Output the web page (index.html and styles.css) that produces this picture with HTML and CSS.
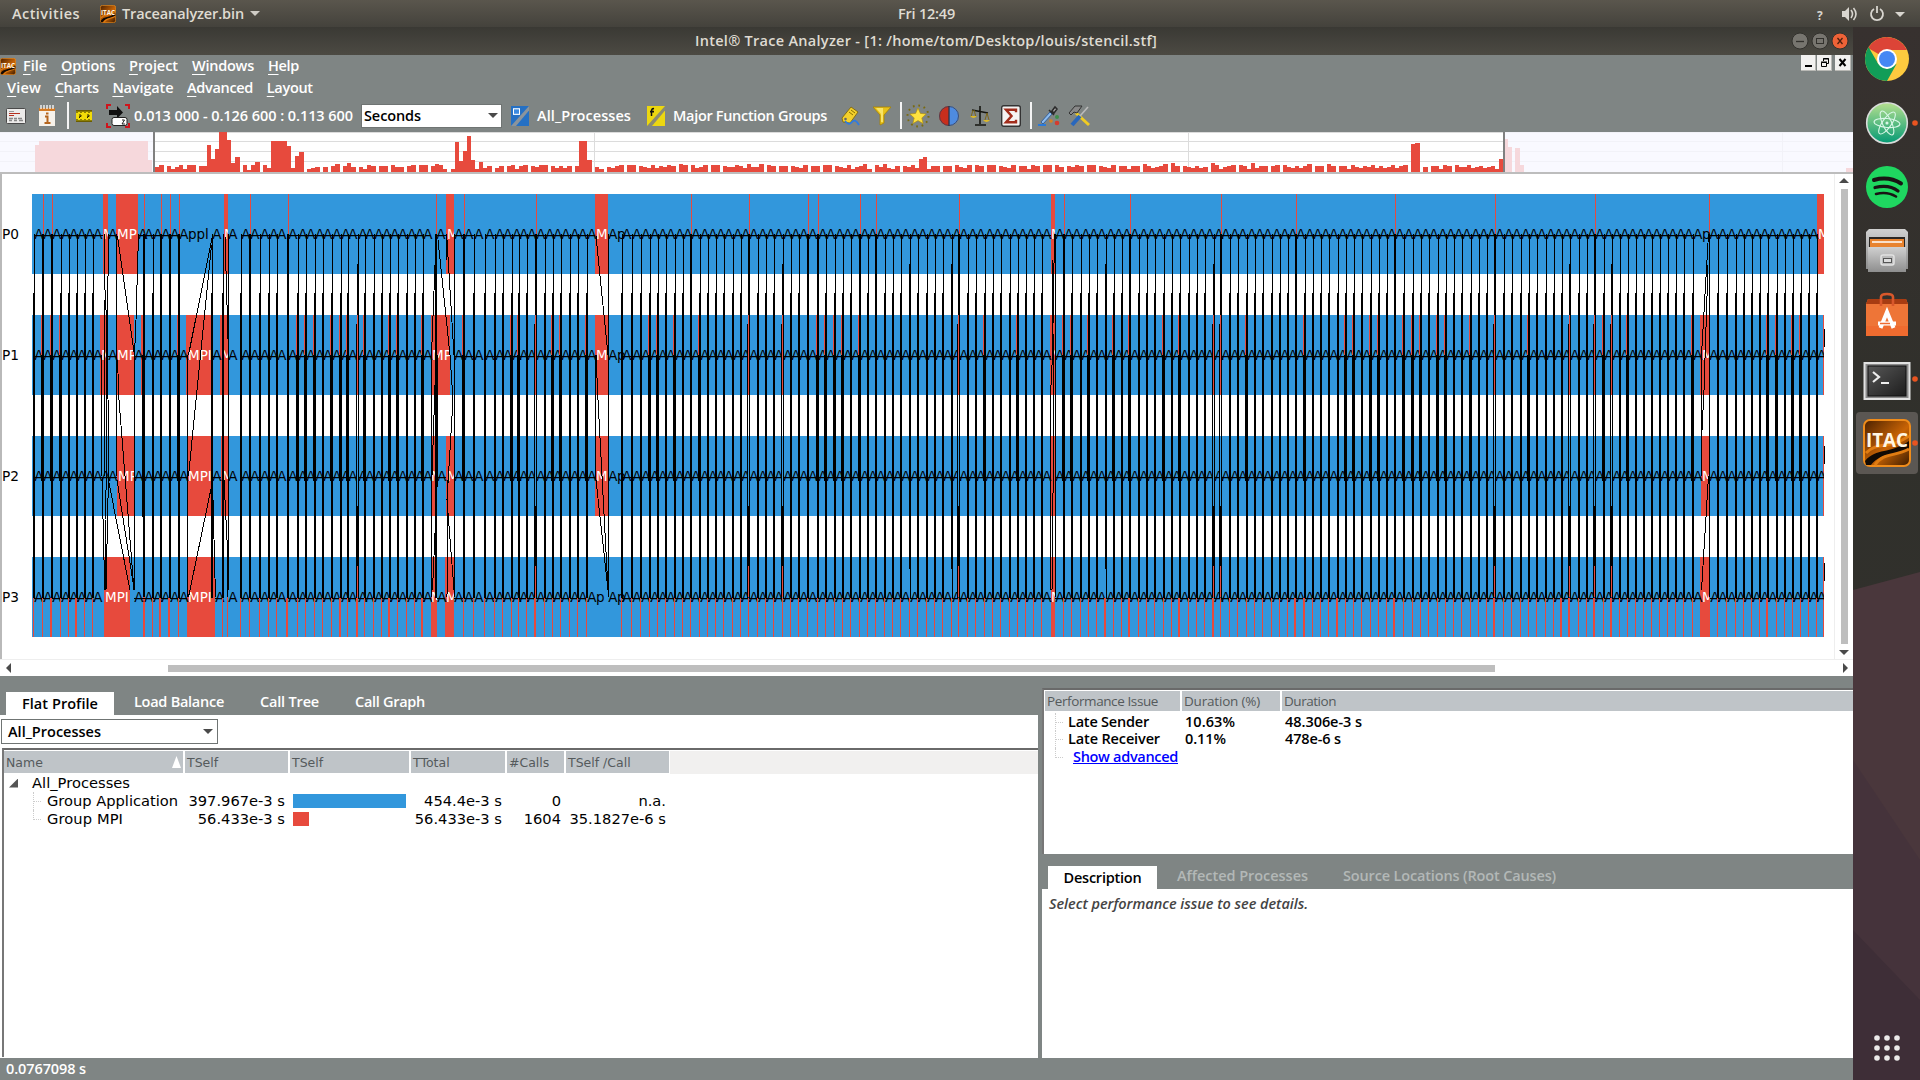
FILE: index.html
```html
<!DOCTYPE html>
<html lang="en">
<head>
<meta charset="utf-8">
<title>Intel Trace Analyzer</title>
<link rel="stylesheet" href="styles.css">
</head>
<body>
<svg class="defs" width="0" height="0">
  <defs>
    <linearGradient id="org" x1="0" y1="0" x2="1" y2="1"><stop offset="0" stop-color="#4a2000"/><stop offset=".55" stop-color="#c96405"/><stop offset="1" stop-color="#3a1a00"/></linearGradient>
    <linearGradient id="atomg" x1="0" y1="0" x2="0" y2="1"><stop offset="0" stop-color="#b6e08f"/><stop offset="1" stop-color="#049a74"/></linearGradient>
    <linearGradient id="steel" x1="0" y1="0" x2="0" y2="1"><stop offset="0" stop-color="#d0d0d0"/><stop offset="1" stop-color="#8e8e8e"/></linearGradient>
    <linearGradient id="screen" x1="0" y1="0" x2="1" y2="1"><stop offset="0" stop-color="#575757"/><stop offset="1" stop-color="#1d1d1d"/></linearGradient>
    <symbol id="itac" viewBox="0 0 48 48">
      <rect x="1" y="1" width="46" height="46" rx="6" fill="url(#org)" stroke="#f08c1a" stroke-width="2"/>
      <path d="M2 42C14 28 26 36 46 22V30C30 38 20 32 8 46H3z" fill="#120a04"/>
      <path d="M3 34C14 22 26 31 46 17M12 46C20 33 32 38 46 30" fill="none" stroke="#e07c12" stroke-width="3"/>
      <text x="3" y="28" textLength="42" lengthAdjust="spacingAndGlyphs" class="itac-text">ITAC</text>
    </symbol>
  </defs>
</svg>

<header class="topbar">
  <span class="t" data-w="68">Activities</span>
  <svg width="16" height="18" viewBox="0 0 48 48" preserveAspectRatio="none"><use href="#itac"/></svg>
  <span class="t" data-w="122">Traceanalyzer.bin</span>
  <i class="tri-down light"></i>
  <span class="t clock" data-w="57">Fri 12:49</span>
  <svg class="tray" width="90" height="20" viewBox="0 0 90 20">
    <text x="2" y="16" class="tray-q">?</text>
    <path d="M27 7h3l4-4v14l-4-4h-3z" fill="#d8d5cf"/>
    <path d="M36 6q3 4 0 8M38.500 4q5 6 0 12" fill="none" stroke="#d8d5cf" stroke-width="1.600"/>
    <path d="M59 5a6 6 0 1 0 6 0M62 2v7" fill="none" stroke="#d8d5cf" stroke-width="1.800"/>
    <path d="M80 8h10l-5 5z" fill="#d8d5cf"/>
  </svg>
</header>

<div class="desk">
<main class="window">
  <div class="titlebar">
    <span class="t" data-w="462">Intel® Trace Analyzer - [1: /home/tom/Desktop/louis/stencil.stf]</span>
    <svg class="winbtns" width="58" height="18" viewBox="0 0 58 18">
      <circle cx="9" cy="9" r="8" fill="#77756f" stroke="#32312d"/><path d="M5 9.500h8" stroke="#32312d" stroke-width="1.300"/>
      <circle cx="29" cy="9" r="8" fill="#77756f" stroke="#32312d"/><rect x="25.500" y="6.500" width="7" height="5" fill="none" stroke="#32312d"/>
      <circle cx="49" cy="9" r="8" fill="#ee6237" stroke="#32312d"/><path d="M46.500 6l5 6M51.500 6l-5 6" stroke="#4b200f" stroke-width="1.300"/>
    </svg>
  </div>

  <div class="menus">
    <nav class="menu first">
      <svg width="16" height="17" viewBox="0 0 48 48" preserveAspectRatio="none"><use href="#itac"/></svg>
      <span class="t" data-w="24"><u>F</u>ile</span><span class="t" data-w="54"><u>O</u>ptions</span><span class="t" data-w="49"><u>P</u>roject</span><span class="t" data-w="62"><u>W</u>indows</span><span class="t" data-w="31"><u>H</u>elp</span>
      <svg class="mdi" width="50" height="16" viewBox="0 0 50 16">
        <path d="M0 0h15v16H0zM16 0h15v16H16zM34 0h16v16H34z" fill="#b9b9b5"/><path d="M0 0h14v15H0zM16 0h14v15H16zM34 0h15v15H34z" fill="#f2f1f0"/>
        <path d="M4 11h7M38.500 4l6 7M44.500 4l-6 7" stroke="#000" stroke-width="2"/>
        <path d="M20.500 7.500h5v4h-5zM20 7h6M22.500 6V3.500h5v5H26M22 4h6" fill="none" stroke="#000"/>
      </svg>
    </nav>
    <nav class="menu second">
      <span class="t" data-w="34"><u>V</u>iew</span><span class="t" data-w="44"><u>C</u>harts</span><span class="t" data-w="61"><u>N</u>avigate</span><span class="t" data-w="66"><u>A</u>dvanced</span><span class="t" data-w="46"><u>L</u>ayout</span>
    </nav>
    <div class="toolbar">
      <svg style="grid-column:2" width="20" height="16" viewBox="0 0 20 16"><rect x=".5" y=".5" width="19" height="15" rx="1" fill="#ecebea" stroke="#4a4a4a"/><path d="M3 3.500h5" stroke="#999"/><path d="M3 5.500h11M3 7.500h5" stroke="#b5301f"/><path d="M3 10.500h4m1 0h3m1 0h4M3 12.500h3m2 0h3m2 0h4" stroke="#888" stroke-width="1.300"/></svg>
      <svg style="grid-column:4" width="16" height="21" viewBox="0 0 16 21"><path d="M0 3h16v18H0z" fill="#f7f2ea"/><path d="M0 3h16v3H0z" fill="#d27b26"/><path d="M2 0v4M5 0v4M8 0v4M11 0v4M14 0v4" stroke="#eee" stroke-width="1.500"/><path d="M6 11.500h2.500v6M5.500 18h6" fill="none" stroke="#b5651d" stroke-width="2"/><path d="M7 7.500h2.500v2H7z" fill="#b5651d"/></svg>
      <i class="sep" style="grid-column:6"></i>
      <svg style="grid-column:8" width="16" height="12" viewBox="0 0 16 12"><path d="M0 0h16v12H0z" fill="#f2dc08"/><path d="M1 0v3M3 0v2M5 0v3M7 0v2M9 0v3M11 0v2M13 0v3M15 0v2M1 12V9M3 12v-2M5 12V9M7 12v-2M9 12V9M11 12v-2M13 12V9M15 12v-2M3 5h2v1.500H3.500V8M11 5h2v1.500h-1.500V8" fill="none" stroke="#2a2600"/><path d="M0 .5h16M0 11.500h16" stroke="#6b5d00"/></svg>
      <svg style="grid-column:10" width="24" height="24" viewBox="0 0 24 24"><path d="M1 5V1h4M19 1h4v4M1 19v4h4M23 19v4h-4" fill="none" stroke="#d0141c" stroke-width="2"/><path d="M3 6h8V2l6 6.500-6 6V11H3z" fill="#111"/><rect x="6" y="13.500" width="15" height="8" rx="2" fill="#fff" stroke="#222"/><path d="M16 16h2.500l-2.500 4h3" stroke="#222" fill="none"/></svg>
      <span class="t" style="grid-column:12" data-w="219">0.013 000 - 0.126 600 : 0.113 600</span>
      <div class="combo" style="grid-column:14"><span class="t" data-w="57">Seconds</span><i class="tri-down"></i></div>
      <svg style="grid-column:16" width="18" height="20" viewBox="0 0 18 18" preserveAspectRatio="none"><path d="M0 0h18v18H0z" fill="#2570c4"/><path d="M0 18L18 0v4L5 18z" fill="#8b949c"/><rect x="2.500" y="2.500" width="6" height="5" fill="#3c8ae0" stroke="#fff"/></svg>
      <span class="t" style="grid-column:18" data-w="94">All_Processes</span>
      <svg style="grid-column:20" width="18" height="20" viewBox="0 0 18 18" preserveAspectRatio="none"><path d="M0 0h18v18H0z" fill="#ecd710"/><path d="M0 18L18 0v4L5 18z" fill="#8b8b70"/><path d="M7 2.500Q4.500 2 4.500 5v4M3 5h4" fill="none" stroke="#111" stroke-width="1.500"/></svg>
      <span class="t" style="grid-column:22" data-w="154">Major Function Groups</span>
      <svg style="grid-column:24" width="20" height="20" viewBox="0 0 20 20"><path d="M1 12L10 1l7 5-8 11-7-1z" fill="#f4d02c" stroke="#7c6200" stroke-width=".8"/><path d="M8 6l4 3M10 4l4 3" stroke="#8b7000"/><circle cx="4.500" cy="13" r="1.300" fill="#666"/><path d="M4 15q4 5 7 1t7 3" fill="none" stroke="#2f7be0" stroke-width="1.800"/></svg>
      <svg style="grid-column:26" width="18" height="20" viewBox="0 0 18 20"><path d="M0 1h18l-7 8v8l-4 2V9z" fill="#e8c21b" stroke="#a98400" stroke-width=".8"/><path d="M3 2h7v14H8V8z" fill="#f8e468"/></svg>
      <i class="sep" style="grid-column:28"></i>
      <svg style="grid-column:30" width="24" height="24" viewBox="0 0 24 24"><circle cx="12" cy="12" r="10.500" fill="none" stroke="#7a6a10" stroke-width="2" stroke-dasharray="1.700 3.800"/><path d="M12 4l2.400 5.400 5.800.6-4.400 3.900 1.300 5.700-5.100-3-5.100 3 1.300-5.700L3.800 10l5.800-.6z" fill="#ffe240" stroke="#b38f00" stroke-width=".6"/></svg>
      <svg style="grid-column:32" width="20" height="20" viewBox="0 0 20 20"><path d="M10 0a10 10 0 0 0 0 20z" fill="#c92e1c"/><path d="M10 0a10 10 0 0 1 0 20z" fill="#4e8be0"/><circle cx="10" cy="10" r="9.500" fill="none" stroke="#3a3f55" stroke-width=".8"/><path d="M10 0v20" stroke="#2d3548" stroke-width="1.300"/></svg>
      <svg style="grid-column:34" width="20" height="20" viewBox="0 0 20 20"><path d="M10 0v18M2 4l16 3M5 19h11" stroke="#15150f" stroke-width="1.600"/><path d="M3 4L1 11M4 4l2 7M17 7l-2 7M17 7l2 7" stroke="#7c661a"/><path d="M0 10h7q-3.500 4-7 0zM13 14h7q-3.500 4-7 0z" fill="#dcb92a"/></svg>
      <svg style="grid-column:36" width="20" height="22" viewBox="0 0 20 21" preserveAspectRatio="none"><rect x=".7" y=".7" width="18.600" height="19.600" rx="2" fill="#f5f3f2" stroke="#333" stroke-width="1.400"/><path d="M15 7V4.500H5L10.500 10.500 5 16.500h10V14" fill="none" stroke="#a22d1c" stroke-width="2.400"/></svg>
      <i class="sep" style="grid-column:38"></i>
      <svg style="grid-column:40" width="22" height="22" viewBox="0 0 22 22"><path d="M3 17L12 7l2 2L5 19z" fill="#8dbbee" stroke="#245394" stroke-width=".8"/><path d="M11 5l5 5M14 6l3-4 2 2-3 4z" stroke="#2b2b2b" fill="#aaa" stroke-width="1.500"/><path d="M0 19h8v2H0z" fill="#2b79d8"/><circle cx="13" cy="16" r="1.800" fill="#d88122"/><circle cx="19" cy="12" r="2" fill="#3e8f4a"/><circle cx="19" cy="18" r="2.300" fill="#d53c2f"/></svg>
      <svg style="grid-column:42" width="22" height="22" viewBox="0 0 22 22"><path d="M21 20L8 8" stroke="#f0cc22" stroke-width="3"/><path d="M4 20L12 11" stroke="#2867bc" stroke-width="4"/><path d="M12 11l8-9" stroke="#bbb" stroke-width="1.600"/><path d="M1 8L7 1h7L9 8l-3-1-3 3z" fill="#888" stroke="#333"/></svg>
    </div>
  </div>

  <svg class="overview" id="overview" width="1853" height="42" viewBox="0 132 1853 42" shape-rendering="crispEdges"></svg>

  <section class="timeline">
    <svg id="chart" width="1835" height="485" viewBox="0 174 1835 485" shape-rendering="crispEdges"></svg>
    <div class="vscroll"><i class="tri-up"></i><b></b><i class="tri-down"></i></div>
    <div class="hscroll"><i class="tri-left"></i><b></b><i class="tri-right"></i></div>
  </section>

  <section class="panels">
    <div class="left">
      <div class="tabs">
        <span class="tab on"><span class="t" data-w="76">Flat Profile</span></span>
        <span class="t" data-w="90">Load Balance</span><span class="t" data-w="59">Call Tree</span><span class="t" data-w="70">Call Graph</span>
      </div>
      <div class="body">
        <div class="combo wide"><span class="t" data-w="93">All_Processes</span><i class="tri-down"></i></div>
        <div class="profile">
          <div class="head">
            <span>Name<i class="sort"></i></span><span>TSelf</span><span>TSelf</span><span>TTotal</span><span>#Calls</span><span>TSelf /Call</span>
          </div>
          <div class="row root"><i class="expander"></i><span class="t" data-w="98">All_Processes</span></div>
          <div class="row"><i class="branch"></i><span class="name t" data-w="131">Group Application</span><span class="num">397.967e-3 s</span><i class="bar"></i><span class="num">454.4e-3 s</span><span class="num">0</span><span class="num">n.a.</span></div>
          <div class="row"><i class="branch last"></i><span class="name t" data-w="76">Group MPI</span><span class="num">56.433e-3 s</span><i class="bar mpi"></i><span class="num">56.433e-3 s</span><span class="num">1604</span><span class="num">35.1827e-6 s</span></div>
        </div>
      </div>
    </div>

    <div class="right">
      <div class="issues">
        <div class="head"><span><span class="t" data-w="111">Performance Issue</span></span><span><span class="t" data-w="76">Duration (%)</span></span><span><span class="t" data-w="52">Duration</span></span></div>
        <div class="row"><i class="branch"></i><span class="t" data-w="81">Late Sender</span><span class="t" data-w="50">10.63%</span><span class="t" data-w="77">48.306e-3 s</span></div>
        <div class="row"><i class="branch"></i><span class="t" data-w="92">Late Receiver</span><span class="t" data-w="41">0.11%</span><span class="t" data-w="56">478e-6 s</span></div>
        <div class="row"><i class="branch last"></i><a class="t" data-w="105">Show advanced</a></div>
      </div>
      <div class="tabs off">
        <span class="tab on"><span class="t" data-w="78">Description</span></span>
        <span class="t" data-w="131">Affected Processes</span><span class="t" data-w="213">Source Locations (Root Causes)</span>
      </div>
      <div class="desc"><em class="t" data-w="259">Select performance issue to see details.</em></div>
    </div>
  </section>

  <footer><span class="t" data-w="80">0.0767098 s</span></footer>
</main>

<aside class="dock">
  <svg width="67" height="1053" viewBox="1853 27 67 1053">
    <path d="M1853 590L1920 572V1080H1853z" fill="#4a373c"/>
    <path d="M1853 760L1920 860V1080H1853z" fill="#45333b"/>
    <path d="M1853 930L1920 1000V1080H1853z" fill="#3e2e37"/>
    <g transform="translate(1887 59)">
      <circle r="22" fill="#fdca3f"/>
      <path d="M0 0L-19 -11A22 22 0 0 1 20 -9H0z" fill="#dc4437"/>
      <path d="M-18.500 -12A22 22 0 0 0 0 22L9.500 5 0 10-8.700 5z" fill="#119d58"/>
      <circle r="10" fill="#fff"/><circle r="8" fill="#4587f4"/>
    </g>
    <g transform="translate(1887 123)" fill="none" stroke="#d9f7e8" stroke-width="1.100">
      <circle r="20.300" fill="url(#atomg)" stroke="#d9dcdb" stroke-width="1.600"/>
      <ellipse rx="13" ry="4.500" transform="rotate(5)"/><ellipse rx="13" ry="4.500" transform="rotate(65)"/><ellipse rx="13" ry="4.500" transform="rotate(125)"/><circle r="1" fill="#fff"/>
    </g>
    <g transform="translate(1887 187)" fill="none" stroke="#191414" stroke-linecap="round">
      <circle r="21" fill="#1fd760" stroke="none"/><path d="M-13 -7Q2 -11 14 -3.500" stroke-width="4"/><path d="M-12 .5Q2 -3 11 4" stroke-width="3.200"/><path d="M-11 7Q0 4 9 9.500" stroke-width="2.600"/>
    </g>
    <path d="M1869 229h36l3 3v37h-42v-37z" fill="url(#steel)"/><path d="M1869 237h36v12h-36z" fill="#2b2724"/><path d="M1870 239h34v9h-34z" fill="#e8832f"/><path d="M1872 242h30" stroke="#fff" stroke-width="1.500"/><path d="M1868 247h38v25h-38z" fill="url(#steel)"/><rect x="1881" y="255" width="13" height="10" rx="2" fill="#bbb" stroke="#e2e2e2" stroke-width="1.500"/><rect x="1883.500" y="258.500" width="8" height="4" fill="#ddd" stroke="#555"/>
    <path d="M1868 299h38l2 5v32h-42v-32z" fill="#ee7537"/><path d="M1868 299h38l2 5h-42z" fill="#a83c12"/><path d="M1866 326h42v10h-42z" fill="#f0642a" opacity=".6"/><path d="M1881 306v-9q0-3 6-3t6 3v9" fill="none" stroke="#d9582b" stroke-width="2.600"/>
    <path d="M1880.500 328L1887 312l6.500 16M1878 323.500h18" fill="none" stroke="#fff" stroke-width="4"/><path d="M1880 323.500h10" stroke="#ee6a30" stroke-width="1.500"/>
    <rect x="1864.500" y="363" width="45" height="36" fill="#8a8a8a" stroke="#e2e2e2" stroke-width="2"/><rect x="1868" y="366" width="38" height="30" fill="url(#screen)" stroke="#111"/>
    <path d="M1873 372l6 5-6 5M1881 383h8" fill="none" stroke="#eee" stroke-width="2.200"/>
    <rect x="1856" y="412" width="62" height="62" rx="4" fill="#5b5753"/>
    <svg x="1863" y="419" width="48" height="48" viewBox="0 0 48 48"><use href="#itac"/></svg>
    <g fill="#e95420"><circle cx="1915" cy="123" r="2.800"/><circle cx="1915" cy="379" r="2.800"/><circle cx="1915" cy="443" r="2.800"/></g>
    <g fill="#eceaea" id="grid"></g>
  </svg>
</aside>
</div>
<script src="app.js"></script>
</body>
</html>
```
FILE: styles.css
```css
* { box-sizing: border-box; }
body { margin: 0; width: 1920px; height: 1080px; overflow: hidden; background: #35312e; font: 500 15px/18px "Open Sans", "Noto Sans", sans-serif; color: #fff; }
.defs { position: absolute; }
svg { display: block; flex: none; }
.t { display: inline-block; white-space: nowrap; font-size: 14.5px; font-weight: 600; flex: none; justify-self: start; }
.itac-text { font: 700 20px "Open Sans", sans-serif; fill: #fff6e4; }
u { text-underline-offset: 3px; text-decoration-thickness: 1px; }

.topbar { height: 27px; display: flex; align-items: center; padding-left: 12px; background: linear-gradient(#5a564d, #44423c); color: #dfdbd2; }
.topbar svg:first-of-type { margin: 0 6px 0 20px; }
.topbar .tri-down { margin-left: 6px; }
.clock { margin-left: 638px; }
.tray { margin-left: 860px; }
.tray-q { font: 700 12px "Open Sans", sans-serif; fill: #d8d5cf; }

.tri-down, .tri-up { width: 10px; height: 5px; background: #4a4a4a; clip-path: polygon(0 0, 100% 0, 50% 100%); flex: none; }
.tri-up { clip-path: polygon(50% 0, 100% 100%, 0 100%); }
.tri-left, .tri-right { width: 5px; height: 10px; background: #4a4a4a; clip-path: polygon(100% 0, 100% 100%, 0 50%); }
.tri-right { clip-path: polygon(0 0, 100% 50%, 0 100%); }
.light { background: #cfccc5; }

.desk { display: flex; height: 1053px; }
.window { width: 1853px; display: flex; flex-direction: column; background: #7f8584; }
.titlebar { height: 28px; display: flex; align-items: center; padding-left: 695px; background: linear-gradient(#3a3934, #4c4a43); color: #dfdbd2; }
.winbtns { margin-left: 634px; }
.menus { height: 77px; display: flex; flex-direction: column; }
.menu { display: flex; height: 22px; align-items: center; gap: 14px; }
.first svg:first-child { margin-right: -7px; }
.second { padding-left: 7px; gap: 13.7px; }
.mdi { margin-left: 1488px; align-self: flex-start; }
.toolbar { height: 33px; display: grid; align-items: center; justify-items: start;
  grid-template-columns: 6px 20px 13px 16px 12px 2px 7px 16px 14px 24px 4px 219px 8px 141px 9px 18px 8px 94px 16px 18px 8px 154px 14px 20px 12px 18px 9px 2px 4px 24px 9px 20px 11px 20px 11px 20px 9px 2px 6px 22px 8px 22px; }
.toolbar > * { grid-row: 1; }
.sep { width: 2px; height: 27px; background: #f4f4f4; }
.combo { width: 141px; height: 24px; display: flex; align-items: center; justify-content: space-between; padding: 0 3px 0 2px; background: #fff; border: 1px solid #6f7473; color: #000; }
.overview { background: #fff; }

.timeline { height: 502px; display: grid; grid-template-columns: 1835px 18px; grid-template-rows: 485px 17px; background: #fff; }
.vscroll { display: flex; flex-direction: column; align-items: center; gap: 6px; padding-top: 4px; }
.vscroll b { width: 7px; height: 455px; background: #bebebe; }
.hscroll { grid-column: 1 / 3; display: flex; align-items: center; padding-left: 6px; border-top: 1px solid #eee; }
.hscroll b { width: 1327px; height: 7px; margin: 0 348px 0 157px; background: #bebebe; }

.panels { height: 382px; display: flex; gap: 4px; }
.left { width: 1038px; display: flex; flex-direction: column; padding-top: 16px; }
.tabs { height: 23px; display: flex; padding-left: 6px; }
.tab.on { width: 108px; background: #fff; color: #000; display: flex; justify-content: center; padding-top: 3px; margin-right: 20px; }
.left .tabs > .t { margin-right: 36px; }
.left .tabs > .t, .right .tabs > .t { padding-top: 1px; }
.body { flex: 1; background: #fff; color: #000; padding: 4px 0 0; }
.combo.wide { width: 217px; height: 25px; margin-left: 1px; padding: 0 4px 0 6px; }
.profile { margin: 4px 0 0 2px; border-top: 2px solid #6a6a6a; border-left: 2px solid #777; height: 309px; padding-top: 1px; }
.head { display: grid; gap: 2px; background: #fff; color: #555a5c; }
.head > span { background: #bfc4c8; padding: 0 2px; display: flex; align-items: center; justify-content: space-between; }
.profile .head { height: 23px; padding-bottom: 1px; grid-template-columns: 179px 103px 119px 94px 57px 103px; font: 400 12.5px "DejaVu Sans", sans-serif; background: linear-gradient(90deg, #fff 666px, #f1f0ef 666px); }
.sort { width: 9px; height: 12px; background: #fff; clip-path: polygon(50% 0, 100% 100%, 0 100%); }
.profile .row { height: 18px; display: grid; align-items: center; grid-template-columns: 43px 134px 104px 124px 93px 59px 105px; font: 400 14.67px/18px "DejaVu Sans", sans-serif; }
.profile .row .t { font-size: 14.67px; font-weight: 400; }
.profile .row.root { grid-template-columns: 28px 200px; }
.num { text-align: right; white-space: nowrap; }
.bar { width: 113px; height: 14px; margin-left: 8px; background: #3297dc; }
.bar.mpi { width: 16px; background: #e74a3d; }
.expander { width: 9px; height: 9px; margin-left: 5px; background: #555; clip-path: polygon(100% 0, 100% 100%, 0 100%); }
.branch { width: 9px; height: 18px; margin-left: 29px; border-left: 1px dotted #ccc; background: repeating-linear-gradient(90deg, #ccc 0 1px, #fff 1px 2px) 0 9px / 9px 1px no-repeat; }
.branch.last { height: 10px; align-self: start; }

.right { flex: 1; color: #000; }
.issues { height: 166px; margin-top: 12px; background: #fff; border-top: 2px solid #6a6a6a; border-left: 2px solid #777; padding: 1px 0 0 1px; }
.issues .head { height: 21px; padding-bottom: 1px; grid-template-columns: 135px 98px 1fr; }
.issues .head > span { border-right: 0 solid #fff; }
.issues .head .t { font-weight: 400; font-size: 13.5px; }
.issues .row { height: 17.3px; display: grid; align-items: center; grid-template-columns: 23px 117px 100px 200px; }
.issues .branch { margin-left: 10px; }
.issues .head + .row { margin-top: 1px; }
.issues a { color: #00f; text-decoration: underline; margin-left: 5px; }
.tabs.off { height: 35px; padding: 12px 0 0 6px; color: #b3b8b7; }
.tabs.off .tab.on { width: 109px; }
.tabs.off > .t + .t { margin-left: 35px; }
.desc { height: 169px; background: #fff; padding: 5px 7px; color: #444; }
footer { height: 22px; padding: 1px 6px; }
.dock { width: 67px; background: linear-gradient(#37312f, #30302b 400px, #33302e); }
.axis { font: 400 13.700px "DejaVu Sans", sans-serif; fill: #000; }
.app { font: 400 13.500px "DejaVu Sans", sans-serif; fill: #000; }
.mpi-label { font: 400 13.500px "DejaVu Sans", sans-serif; fill: #fff; }
```
FILE: app.js
```javascript
// Spread each label over its nominal width.
document.querySelectorAll('.t[data-w]').forEach(function (el) {
  var w = +el.dataset.w, n = el.textContent.length;
  el.style.letterSpacing = ((w - el.getBoundingClientRect().width) / n).toFixed(3) + 'px';
  el.style.width = w + 'px';
});

var RED = '#e74a3d', BLUE = '#3297dc', out;
function rect(x, y, w, h, c) { out.push('<rect x="' + x + '" y="' + y + '" width="' + w + '" height="' + h + '" fill="' + c + '"/>'); }

// Overview histogram: each run starts at x and holds bar heights for 4px cells.
out = [];
[132, 141, 151, 161].forEach(function (y) { rect(0, y, 1853, 1, '#dcdcdc'); });
[594, 1188, 1782].forEach(function (x) { rect(x, 132, 1, 40, '#dcdcdc'); });
function run(x, cells) {
  cells.forEach(function (h, i) { if (h) rect(x + i * 4, 172 - h, cells[i + 1] === 0 ? 5 : 4, h, RED); });
}
run(155, [5, 7, 0, 6, 3, 5, 7, 3, 7, 7, 0, 6, 6, 27, 13, 23, 40, 40, 32, 9, 15, 0, 7, 2, 7, 10, 0, 7, 4, 31, 31, 31, 31, 26, 4, 16, 20, 0, 3, 4, 5, 0, 5, 0, 6, 8, 0, 6, 9, 5, 0, 5, 3, 7, 6, 0, 6, 6, 0, 7, 5, 5, 0, 6, 7, 0, 7, 7, 0, 6, 8, 7, 3]);
run(451, [3, 30, 11, 21, 36, 12, 3, 10, 4, 6, 0, 4, 6, 0, 6, 7, 3, 6, 7, 0, 6, 5, 7, 7, 0, 6, 4, 6, 4, 6, 0, 6]);
run(579, [31, 31, 12, 0, 5, 3, 0, 5, 4, 6, 7, 0, 7, 7, 0, 6, 5, 4, 7, 4, 6, 5, 7, 6, 0, 8, 7, 0, 7, 4, 5, 7, 0, 7, 7, 0, 6, 5, 5, 7, 6, 4, 8, 5, 5, 8, 0, 7, 6, 0, 6, 6, 0, 6, 5, 4, 7, 0, 6, 6, 0, 7, 7, 0, 6, 5, 4, 7, 3, 5, 6, 8, 3, 0, 7, 5, 8, 4, 3, 6, 0, 6, 5, 7, 4]);
run(919, [13, 15, 3, 6, 6, 0, 6, 6, 0, 7, 5, 4, 7, 0, 7, 6, 0, 7, 7, 0, 6, 5, 4, 7, 0, 6, 6, 3, 7, 6, 0, 7, 7, 0, 7, 5, 0, 6, 5, 7, 6, 0, 7, 7, 0, 6, 5, 4, 7, 0, 6, 6, 3, 6, 6, 0, 8, 6, 4, 5, 6, 8, 0, 9, 6, 0, 6, 5, 4, 6, 4, 5, 0, 9]);
run(1215, [7, 3, 5, 6, 7, 0, 7, 6, 3, 9, 4, 6, 6, 0, 6, 7, 0, 7, 5, 4, 6, 4, 6, 8, 0, 6, 6, 0, 8, 6, 0, 6, 6, 3, 7, 5, 4, 6, 5, 7, 4, 6, 4, 5, 7]);
run(1395, [4, 6, 7, 0]);
run(1411, [28, 29, 0, 5, 0, 6, 6, 3, 7, 6, 0, 7, 5, 5, 7, 4, 5, 6, 4, 5, 6, 3, 13]);
rect(0, 132, 153, 40, 'rgba(248,247,255,.8)');
rect(1505, 132, 348, 40, 'rgba(248,247,255,.8)');
[[35, 4, 27], [39, 109, 31], [148, 4, 12], [1505, 3, 33], [1508, 4, 25], [1515, 5, 24], [1520, 4, 7], [1846, 7, 4]].forEach(function (b) { rect(b[0], 172 - b[2], b[1], b[2], '#f6d8dc'); });
rect(153, 132, 2, 41, '#808080'); rect(1503, 132, 2, 41, '#808080');
rect(0, 172, 1853, 2, '#bdbdbd');
document.getElementById('overview').innerHTML = out.join('');

// Timeline: four process rows joined by message lines.
out = [];
var tops = [194, 315, 436, 557];
tops.forEach(function (y) { rect(32, y, 1792, 80, BLUE); });
var xs = '34 43 52 61 69 77 85 93 153 161 170 179 212 223 241 250 260 269 277 288 298 306 315 323 332 341 348 358 365 374 382 390 398 407 415 423 436 464 474 485 495 503 512 519 527 536 545 553 561 570 578 587 622 632 641 650 658 666 675 683 691 700 708 716 724 733 741 749 758 766 774 783 791 799 808 818 826 835 843 851 860 868 876 885 893 901 910 918 927 935 943 952 959 968 976 985 993 1001 1010 1018 1026 1034 1042 1064 1072 1081 1089 1097 1106 1114 1122 1130 1139 1147 1155 1164 1172 1180 1189 1197 1205 1214 1221 1230 1238 1247 1255 1263 1272 1280 1288 1296 1305 1313 1321 1329 1338 1346 1354 1362 1371 1379 1387 1395 1404 1413 1421 1429 1438 1446 1454 1462 1471 1479 1487 1495 1504 1512 1521 1529 1537 1546 1554 1562 1570 1579 1587 1595 1604 1612 1620 1628 1636 1644 1652 1660 1668 1676 1684 1693 1718 1727 1736 1744 1752 1760 1768 1777 1785 1793 1801 1809 1817'.split(' ').map(Number);
function set(s) { return new Set(s.split(' ').map(Number)); }
var p0red = set('43 52 161 170 179 250 288 436 464 536 691 749 808 818 860 876 959 1064 1130 1221 1296 1395 1495 1595');
var p1red = set('43 52 61 179 298 306 315 332 341 348 365 390 398 423 464 512 519 553 561 587 650 658 675 700 818 826 835 843 860 985 1018 1064 1072 1089 1114 1130 1164 1180 1247 1305 1346 1354 1371 1379 1404 1413 1421 1438 1446 1471 1529 1604 1628 1693 1768 1777 1793 1801');
var hollow = set('358 536 749 783 959 1214 1221 1495 1570 1595 1612');
var early = set('358 783 910 952 1106 1214 1570 1612');
var wide3 = set('52 77 161 170 288 341 358 390 423 536 1106 1130 1180 1214 1296 1305 1338 1395 1495 1562 1570 1595 1612 1768');
function red(row, list) { list.forEach(function (b) { rect(b[0], tops[row], b[1] - b[0], 80, RED); }); }
red(0, [[103, 108], [116, 138], [144, 145], [224, 228], [446, 454], [595, 608], [1051, 1055], [1709, 1710], [1817, 1824]]);
red(1, [[100, 108], [116, 134], [141, 144], [186, 212], [220, 228], [431, 450], [595, 608], [1050, 1055], [1700, 1709], [1823, 1824]]);
red(2, [[117, 134], [188, 212], [221, 228], [431, 437], [446, 454], [595, 608], [1051, 1055], [1701, 1709], [1823, 1824]]);
red(3, [[104, 130], [143, 145], [187, 215], [227, 228], [431, 437], [445, 454], [1051, 1055], [1700, 1710], [1823, 1824]]);

var extra = { 0: [32, 108, 138, 144, 228, 454, 608, 1055, 1709], 1: [32, 108, 134, 144, 228, 454, 608, 1055, 1709], 2: [32, 101, 108, 134, 144, 228, 437, 454, 608, 1055, 1709], 3: [32, 134, 144, 215, 228, 437, 454, 608, 1055, 1710] };
var labels = [
  [[103, 108, 'M'], [116, 138, 'MP'], [224, 228, 'M'], [446, 454, 'M'], [595, 608, 'M'], [1051, 1055, 'M'], [1817, 1824, 'M']],
  [[100, 108, 'M'], [116, 134, 'MP'], [187, 212, 'MPI'], [220, 228, 'M'], [431, 450, 'MP'], [595, 608, 'M'], [1051, 1055, 'M'], [1701, 1709, 'M']],
  [[117, 134, 'MP'], [187, 212, 'MPI'], [221, 228, 'M'], [431, 437, 'M'], [446, 454, 'M'], [595, 608, 'M'], [1701, 1709, 'M']],
  [[104, 130, 'MPI'], [187, 215, 'MPI'], [431, 437, 'M'], [445, 454, 'M'], [1051, 1055, 'M'], [1701, 1709, 'M']]];
function label(x0, x1, y, s, cls) {
  out.push('<svg x="' + x0 + '" y="' + (y - 12) + '" width="' + (x1 - x0) + '" height="18"><text x="0" y="17" class="' + cls + '">' + s + '</text></svg>');
}
// One caption per interval; short intervals only have room for the first letter.
tops.forEach(function (top, r) {
  var y = top + 40, edges = xs.concat(extra[r]).sort(function (a, b) { return a - b; });
  var ax = [], s = '';
  edges.forEach(function (x, i) {
    var nx = edges[i + 1] || 1824;
    labels[r].forEach(function (l) { if (l[0] >= x && l[0] < nx) nx = l[0]; });
    if (nx - x < 6 || labels[r].some(function (l) { return x >= l[0] && x < l[1]; })) return;
    if (nx - x < 11) rect(x, y + 1, nx - x, 1, '#000');
    if (x === 1817) { label(x, nx, y, 'A', 'app'); return; }
    'Appl'.split('').forEach(function (c, k) {
      var off = [0, 9.1, 17.5, 26][k];
      if (k === 0 || off + 4 < nx - x) { ax.push((x + off + (k ? 0 : .2)).toFixed(1)); s += c; }
    });
  });
  out.push('<text class="app" y="' + (y + 5) + '" x="' + ax.join(' ') + '">' + s + '</text>');
  labels[r].forEach(function (l) { label(l[0] + (l[1] - l[0] > 6 ? 1 : 0), l[1], y, l[2], 'mpi-label'); });
  out.push('<text class="axis" x="2" y="' + (y + 5) + '">P' + r + '</text>');
});

xs.forEach(function (x) {
  var k = '#000';
  rect(x, 234, 1, 364, k);
  if (p0red.has(x)) { rect(x, 194, 1, 40, RED); rect(x - 1, 234, 2, 90, k); }
  if (hollow.has(x)) {
    rect(x - 1, early.has(x) ? 264 : 324, 1, 51, k);
    rect(x - 1, 315, 1, 80, RED);
    rect(x - 2, 324, 1, 182, k);
    rect(x - 2, 506, 3, 60, k);
    rect(x - 2, 566, 1, 32, k);
    rect(x - 1, 566, 1, 31, RED);
    rect(x - 1, 395, 1, 41, '#fff'); rect(x - 1, 436, 1, 70, BLUE);
  } else {
    rect(x - 1, early.has(x) ? 264 : 293, 1, 305, k);
  }
  if (p1red.has(x)) { rect(x - 2, 315, 1, 40, RED); rect(x - 2, 355, 1, 126, k); }
  if (x !== 212) rect(x - (wide3.has(x) ? 2 : 1), 598, wide3.has(x) ? 2 : 1, 39, RED);
});
function line(a) { out.push('<path d="M' + a.replace(/;/g, 'L') + '" fill="none" stroke="#000" stroke-width="1"/>'); }
['104.5,234;105,290;106.500,320;106.500,476;105,520;105,590', '108.500,234;107.500,320;108.500,476;106,590', '101.500,355;102,476;104,560;105,590', '104.500,300;104.500,476',
 '116.500,234;116.500,476', '117.500,236;134.500,355', '138.500,234;136,320;134.500,355;134.500,590', '117.500,360;119,400;134,590', '117,480;133.500,585', '109,483;130,590',
 '144.500,234;144.500,597', '143.500,234;143.500,597', '142,355;142.500,476;144,597', '212,238;188.500,355', '211.500,245;196,400;188.500,476', '187.500,355;187.500,597', '212,484;188.500,597', '212.500,480;215.500,597',
 '225,236;228.500,355;228.500,590', '222,355;224,480;227.500,550;227.500,597', '228.500,234;228.500,480', '436,240;431.500,355;431.500,597', '438,240;450,355;453,400', '447,240;454,355', '446.500,234;446.500,260', '454.500,234;454.500,597',
 '436,355;432,476', '437.500,355;437.500,476;432.500,590', '453,400;447,500;454,590', '447.500,480;447,597',
 '596,236;608,355', '595.500,355;595.500,480', '596,355;598,400;608,590', '596,480;608,590', '608.500,234;608.500,597', '1055.500,234;1055.500,597', '1054.500,234;1052.500,355;1050.500,395;1050.500,590', '1052.500,260;1052.500,300;1054,400;1052,590',
 '1708.500,234;1701.500,355', '1709.500,234;1709.500,597', '1708,265;1704,390;1701.500,440', '1701.500,355;1701.500,476', '1708.500,476;1701.500,590'].forEach(line);
[329, 446, 563].forEach(function (y) { rect(1824, y, 1, 18, '#000'); });
rect(0, 174, 2, 485, '#b9b9b9'); rect(1834, 174, 1, 485, '#eee');
document.getElementById('chart').innerHTML = out.join('');

out = [];
[1038, 1048, 1058].forEach(function (y) { [1877, 1887, 1897].forEach(function (x) { out.push('<circle cx="' + x + '" cy="' + y + '" r="2.800"/>'); }); });
document.getElementById('grid').innerHTML = out.join('');
```
